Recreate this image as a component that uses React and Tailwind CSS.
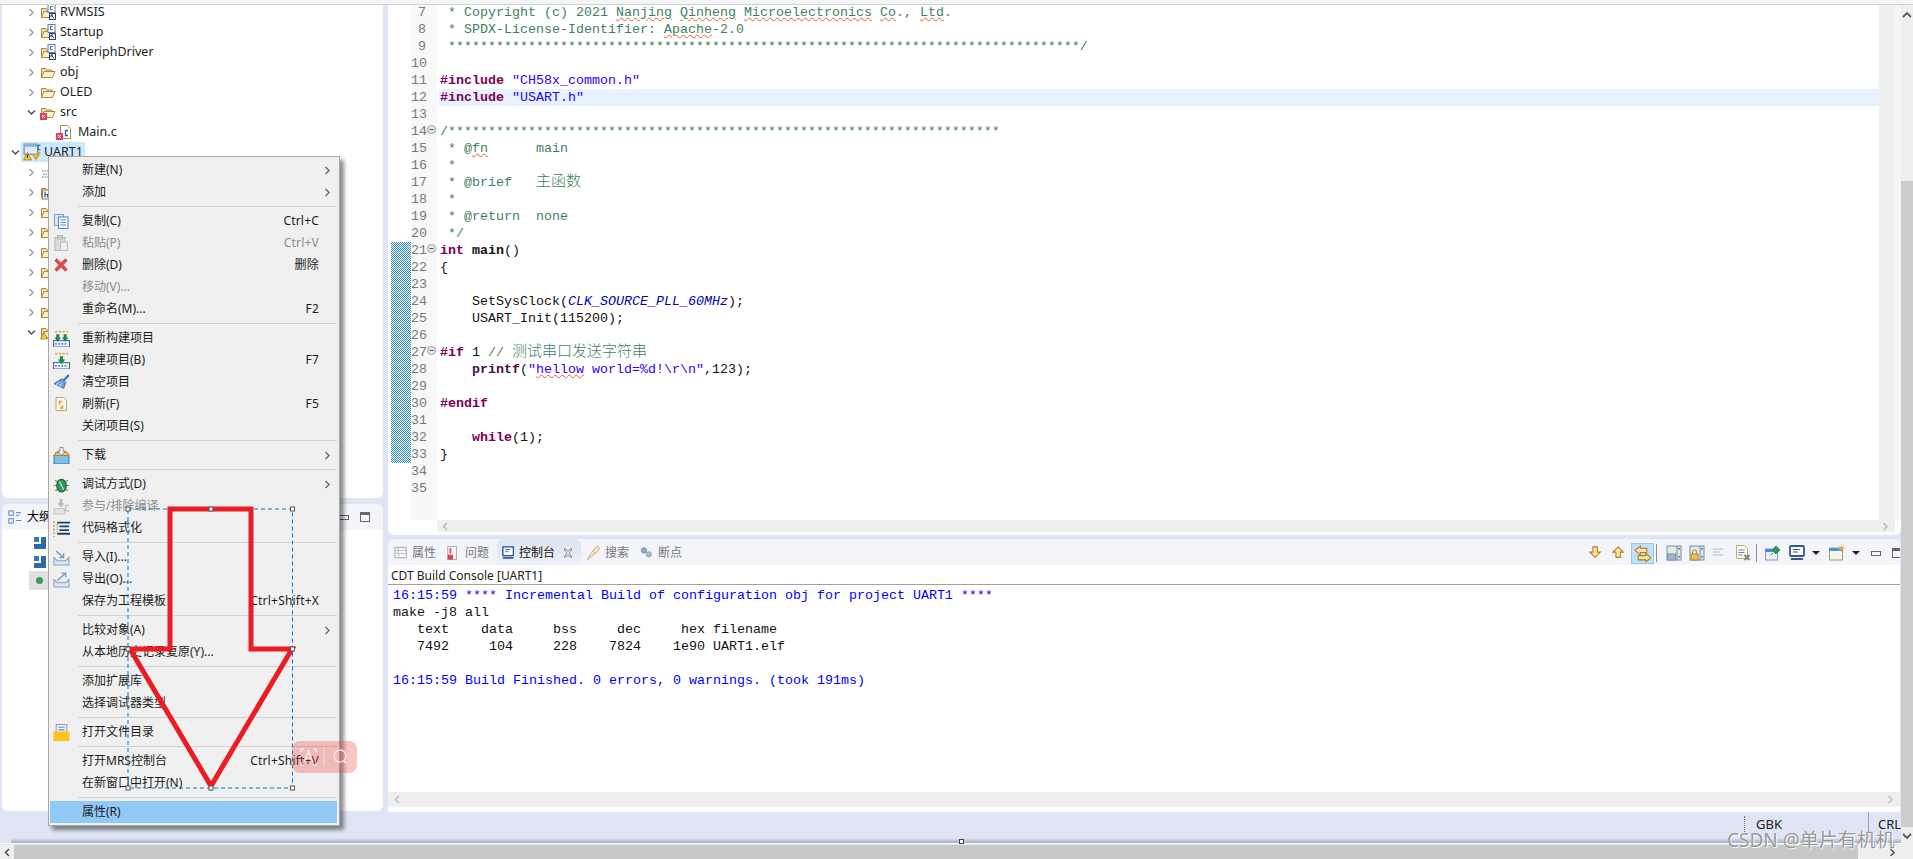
import React from "react";

const uiFont = "font-['Noto_Sans','Noto_Sans_CJK_SC',sans-serif]";
const codeFont = "font-['Liberation_Mono','Noto_Sans_CJK_SC',monospace]";

const Ico = ({ children, size = 16 }) => (
  <svg width={size} height={size} viewBox="0 0 16 16" className="shrink-0" fill="none">
    {children}
  </svg>
);

const Chevron = ({ open, color = "#a0a0a0" }) => (
  <svg width="9" height="9" viewBox="0 0 9 9" fill="none" className="shrink-0">
    {open ? (
      <path d="M1 2.5 4.5 6 8 2.5" stroke="#505050" strokeWidth="1.5" />
    ) : (
      <path d="M2.5 1 6 4.5 2.5 8" stroke={color} strokeWidth="1.5" />
    )}
  </svg>
);

const FolderShape = () => (
  <>
    <path d="M1.5 13.5V4.5h4.5l1 1.5h5v1.5" fill="#f3dca6" stroke="#ad8744" />
    <path d="M1.5 13.5 4 7.5h11l-2.5 6z" fill="#fdf1cd" stroke="#ad8744" />
  </>
);

const FolderIcon = () => (
  <Ico>
    <FolderShape />
  </Ico>
);

const SourceFolder = () => (
  <Ico>
    <FolderShape />
    <rect x="8" y="0.5" width="7" height="8" fill="#fff" stroke="#5f7fa8" />
    <path d="M12.5 2.5h-2v3h2" stroke="#2e5f9e" />
    <rect x="9.5" y="9.5" width="6" height="6" fill="#e8eef8" stroke="#33415c" />
    <path d="M11 11l3 3M11 11h2M11 11v2" stroke="#33415c" />
  </Ico>
);

const ErrorBadge = () => (
  <>
    <rect x="0" y="9" width="7" height="7" fill="#d9405a" />
    <path d="M1.7 10.7l3.4 3.4M5.1 10.7l-3.4 3.4" stroke="#fff" />
  </>
);

const ErrFolder = () => (
  <Ico>
    <FolderShape />
    <ErrorBadge />
  </Ico>
);

const CFileErr = () => (
  <Ico>
    <path d="M4.5 1.5h7l3 3v10h-10z" fill="#fff" stroke="#a98e58" />
    <path d="M12 6.5H9.5v5H12" stroke="#2e5f9e" strokeWidth="1.3" />
    <ErrorBadge />
  </Ico>
);

const ProjectIcon = () => (
  <Ico size={18}>
    <rect x="1" y="1" width="12" height="9" fill="#dfe9f6" stroke="#7188a8" />
    <rect x="1" y="1" width="12" height="2.5" fill="#8fb2d8" />
    <path d="M15.5 2h-2v4h2" stroke="#2e5f9e" />
    <path d="M9 10l2.5 4L15 8" stroke="#e3a51e" strokeWidth="2" />
    <path d="M4 8.5 7.5 15H.5z" fill="#f5cd3c" stroke="#a17a10" strokeWidth="0.7" />
    <path d="M4 10.5v2.5" stroke="#3a2a00" />
  </Ico>
);

const BinaryIcon = () => (
  <Ico>
    <path d="M2 7h6M3 10h8M2 13h6" stroke="#6b7078" strokeDasharray="1.5 1" />
  </Ico>
);

const IncludeIcon = () => (
  <Ico>
    <FolderShape />
    <rect x="2.5" y="6" width="8" height="9" fill="#fff" stroke="#9a7d43" />
    <path d="M5 7.5v6M5 10.5h2.5v3" stroke="#2e5f9e" strokeWidth="1.2" />
  </Ico>
);

const WarnFolder = () => (
  <Ico>
    <FolderShape />
    <path d="M4 8 7.5 15H.5z" fill="#f5cd3c" stroke="#a17a10" strokeWidth="0.7" />
  </Ico>
);

const Copy = () => (
  <Ico>
    <rect x="1.5" y="1.5" width="9" height="11" fill="#dbe6f4" stroke="#7c9cc4" />
    <rect x="5.5" y="4" width="9.5" height="11.5" fill="#f2f6fb" stroke="#5f83b3" />
    <path d="M7.5 7h5.5M7.5 9.5h5.5M7.5 12h5.5" stroke="#6f93c0" />
  </Ico>
);

const Paste = () => (
  <Ico>
    <rect x="2" y="2.5" width="10" height="13" fill="#dcdcdc" stroke="#b5b5b5" />
    <rect x="4.5" y="0.5" width="5" height="3.5" fill="#cfcfcf" stroke="#b5b5b5" />
    <rect x="7.5" y="7" width="7" height="8.5" fill="#efefef" stroke="#bdbdbd" />
  </Ico>
);

const Del = () => (
  <Ico>
    <path d="M2.5 2.5l11 11M13.5 2.5l-11 11" stroke="#dd4a4a" strokeWidth="3.4" />
  </Ico>
);

const Rebuild = ({ two }) => (
  <Ico size={17}>
    <rect x="0.5" y="10" width="15" height="6" fill="#eef3fa" stroke="#4d6a92" />
    <path d="M2 13h12" stroke="#3f7dd0" strokeDasharray="1.5 1.5" strokeWidth="1.6" />
    <path d="M2 1.5h12" stroke="#d8a93c" strokeDasharray="2 1.5" strokeWidth="1.6" />
    {two ? (
      <path d="M3 4h3v3h1.5L4.500 11 1.500 7H3zM10 4h3v3h1.500L11.500 11 8.500 7H10z" fill="#1d8a4c" />
    ) : (
      <path d="M6.500 4h3v3h2L8 11.500 4.500 7h2z" fill="#1d8a4c" />
    )}
  </Ico>
);

const Broom = () => (
  <Ico size={17}>
    <path d="M15 1 9 7" stroke="#2f73b8" strokeWidth="2" />
    <path d="M8.500 4.500l3.500 3.500-2 5.500-9-4.500z" fill="#6fa3dc" stroke="#2f5f9a" strokeWidth="0.8" />
    <path d="M3 10.500 5 8M6 12l2-3" stroke="#fff" strokeWidth="0.8" />
  </Ico>
);

const Refresh = () => (
  <Ico>
    <path d="M3 1.500h7.500l3 3v10H3z" fill="#fbf7ea" stroke="#b9ab84" />
    <path d="M9 5.500H6.500v3M7 12h2.500V9" stroke="#e0a522" strokeWidth="1.500" />
  </Ico>
);

const Download = () => (
  <Ico size={17}>
    <path d="M1 8h14v8H1z" fill="#7fc0ea" stroke="#3b7fae" />
    <path d="M1 8l2-3h10l2 3z" fill="#f1c766" stroke="#a9873a" />
    <path d="M6.500 0.500h3V4H12L8 7.500 4 4h2.500z" fill="#fff" stroke="#666" strokeWidth="0.7" />
  </Ico>
);

const Bug = () => (
  <Ico size={17}>
    <path d="M2 4l3 2M14 4l-3 2M1 9h3M15 9h-3M2 14l3-2M14 14l-3-2" stroke="#7a7a6a" />
    <ellipse cx="8" cy="9" rx="4.500" ry="6" fill="#2f9a5c" stroke="#14603a" />
    <path d="M6 5l4 8" stroke="#c7e8d2" strokeWidth="1.200" />
  </Ico>
);

const Exclude = () => (
  <Ico size={17}>
    <path d="M6 1h3v4h2L7.500 9 4 5h2z" fill="#bdbdbd" />
    <rect x="1" y="10" width="10" height="5" fill="#e4e4e4" stroke="#c4c4c4" />
    <path d="M15 7h-3v5h3" stroke="#c0c0c0" strokeWidth="1.200" />
  </Ico>
);

const Format = () => (
  <Ico size={17}>
    <path d="M1 1v15" stroke="#e0a030" strokeDasharray="2 1.500" strokeWidth="1.500" />
    <path d="M4 2.500h12M6 6h9M6 9.500h9M4 13h12" stroke="#24415f" strokeWidth="1.800" />
    <path d="M4 4v8" stroke="#3f7dd0" strokeDasharray="1 1" />
  </Ico>
);

const ImportIco = () => (
  <Ico size={17}>
    <path d="M1 8v7h14V8l-3 3H4z" fill="#dde6f2" stroke="#8aa0bc" />
    <path d="M3 2l7 6M10 4v4H6" stroke="#7a9cc4" strokeWidth="1.300" />
  </Ico>
);

const ExportIco = () => (
  <Ico size={17}>
    <path d="M1 8v7h14V8l-3 3H4z" fill="#dde6f2" stroke="#8aa0bc" />
    <path d="M4 9l8-7M8 2h4v4" stroke="#7a9cc4" strokeWidth="1.300" />
  </Ico>
);

const OpenDir = () => (
  <Ico size={17}>
    <rect x="3" y="0.500" width="10" height="8" fill="#eef3fb" stroke="#8aa0c8" />
    <path d="M5 3h6M5 5.500h6" stroke="#6b8fd0" />
    <path d="M0.500 7H15.500V16H0.500z" fill="#ffc21f" />
  </Ico>
);

const menuRows = [
  { t: "新建(N)", sub: 1 },
  { t: "添加", sub: 1 },
  "-",
  { t: "复制(C)", k: "Ctrl+C", i: <Copy /> },
  { t: "粘贴(P)", k: "Ctrl+V", i: <Paste />, off: 1 },
  { t: "删除(D)", k: "删除", i: <Del /> },
  { t: "移动(V)...", off: 1 },
  { t: "重命名(M)...", k: "F2" },
  "-",
  { t: "重新构建项目", i: <Rebuild two /> },
  { t: "构建项目(B)", k: "F7", i: <Rebuild /> },
  { t: "清空项目", i: <Broom /> },
  { t: "刷新(F)", k: "F5", i: <Refresh /> },
  { t: "关闭项目(S)" },
  "-",
  { t: "下载", sub: 1, i: <Download /> },
  "-",
  { t: "调试方式(D)", sub: 1, i: <Bug /> },
  { t: "参与/排除编译", off: 1, i: <Exclude /> },
  { t: "代码格式化", i: <Format /> },
  "-",
  { t: "导入(I)...", i: <ImportIco /> },
  { t: "导出(O)...", i: <ExportIco /> },
  { t: "保存为工程模板", k: "Ctrl+Shift+X" },
  "-",
  { t: "比较对象(A)", sub: 1 },
  { t: "从本地历史记录复原(Y)..." },
  "-",
  { t: "添加扩展库" },
  { t: "选择调试器类型" },
  "-",
  { t: "打开文件目录", i: <OpenDir /> },
  "-",
  { t: "打开MRS控制台", k: "Ctrl+Shift+V" },
  { t: "在新窗口中打开(N)" },
  "-",
  { t: "属性(R)", active: 1 },
];

const ContextMenu = () => (
  <div className={`absolute left-[48px] top-[156px] w-[292px] h-[670px] bg-[#f0f0f0] border border-[#a8a8a8] pt-[2px] pl-px text-[12px] text-[#1c1c1c] shadow-[4px_4px_4px_rgba(0,0,0,0.45)] ${uiFont}`}>
    {menuRows.map((r, i) =>
      r === "-" ? (
        <div key={i} className="h-[7px] flex items-center pl-[28px] w-[287px]">
          <div className="h-px w-full bg-[#d2d2d2]" />
        </div>
      ) : (
        <div key={i} className={`h-[22px] w-[287px] flex items-center ${r.active ? "bg-[#91c9f7]" : ""} ${r.off ? "text-[#8c8c8c]" : ""}`}>
          <div className="w-[32px] pl-[3px] flex items-center shrink-0">{r.i}</div>
          <span className="flex-1 whitespace-nowrap">{r.t}</span>
          {r.k && <span className="whitespace-nowrap tracking-[0.2px]">{r.k}</span>}
          <div className="w-[18px] flex justify-start pl-[4px] shrink-0">
            {r.sub && <Chevron color="#707070" />}
          </div>
        </div>
      )
    )}
  </div>
);

const handles = [
  [128, 509], [211, 509], [292.500, 509], [128, 649], [292.500, 649], [128, 788], [211, 788], [292.500, 788],
];

// annotation drawn on top of the screenshot, page coordinates
const RedArrow = () => (
  <svg className="absolute left-0 top-0 pointer-events-none" width="400" height="859" viewBox="0 0 400 859" fill="none">
    <rect x="128" y="509" width="164.500" height="279" stroke="#0078d7" strokeDasharray="4 3" />
    <path d="M170 509H251V649H292L211 786 130 649H170Z" stroke="#ed1c24" strokeWidth="5" />
    {handles.map(([x, y]) => (
      <rect key={`${x}-${y}`} x={x - 2} y={y - 2} width="4" height="4" fill="#fff" stroke="#555" />
    ))}
  </svg>
);

const PinkTool = () => (
  <div className="absolute left-[292px] top-[741px] w-[65px] h-[32px] rounded-lg bg-[#ee4035]/30 flex items-center">
    <svg width="65" height="32" viewBox="0 0 65 32" fill="none" stroke="#fff" strokeOpacity="0.75" strokeWidth="1.300">
      <path d="M9 11V8h3M21 8h3v3M9 21v3h3M24 21v3h-3" />
      <path d="M12.500 21 16.500 10 20.500 21M14 17.500h5" />
      <path d="M32 7v18" strokeOpacity="0.4" />
      <circle cx="48" cy="15" r="6" />
      <path d="M52 20l2 2" />
    </svg>
  </div>
);

const treeRows = [
  { d: 31, i: <SourceFolder />, t: "RVMSIS" },
  { d: 31, i: <SourceFolder />, t: "Startup" },
  { d: 31, i: <SourceFolder />, t: "StdPeriphDriver" },
  { d: 31, i: <FolderIcon />, t: "obj" },
  { d: 31, i: <FolderIcon />, t: "OLED" },
  { d: 31, open: 1, i: <ErrFolder />, t: "src" },
  { d: 0, i: <CFileErr />, t: "Main.c" },
];

const Tree = () => (
  <div className={`-mt-[3px] text-[12.500px] text-[#222] ${uiFont}`}>
    {treeRows.map((r) => (
      <div key={r.t} className="h-[20px] flex items-center">
        {r.d ? (
          <>
            <div className="w-[34px] pl-[25px]"><Chevron open={r.open} /></div>
            <div className="ml-[4px]">{r.i}</div>
            <span className="ml-[4px]">{r.t}</span>
          </>
        ) : (
          <>
            <div className="ml-[54px]">{r.i}</div>
            <span className="ml-[6px]">{r.t}</span>
          </>
        )}
      </div>
    ))}
    <div className="h-[20px] flex items-center">
      <div className="pl-[9px] w-[19px]"><Chevron open /></div>
      <div className="flex items-center bg-[#cce8ff] w-[64px] h-[20px] pl-[2px]">
        <ProjectIcon />
        <span className="ml-[3px]">UART1</span>
      </div>
    </div>
    {[<BinaryIcon />, <IncludeIcon />, <FolderIcon />, <FolderIcon />, <FolderIcon />, <FolderIcon />, <FolderIcon />, <FolderIcon />].map((ic, i) => (
      <div key={i} className="h-[20px] flex items-center">
        <div className="w-[34px] pl-[25px]"><Chevron /></div>
        <div className="ml-[4px]">{ic}</div>
      </div>
    ))}
    <div className="h-[20px] flex items-center">
      <div className="w-[34px] pl-[25px]"><Chevron open /></div>
      <div className="ml-[4px]"><WarnFolder /></div>
    </div>
  </div>
);

const OutlineIcon = () => (
  <Ico size={14}>
    <rect x="1" y="1" width="5" height="5" stroke="#3c78c0" />
    <rect x="1" y="10" width="5" height="5" stroke="#3c78c0" />
    <path d="M9 3h6M9 6h4M9 12h6" stroke="#3c78c0" />
  </Ico>
);

const ModuleIcon = () => (
  <svg width="12" height="12" viewBox="0 0 12 12" className="shrink-0">
    <path d="M0 0h5v5H0z" fill="#3478b4" />
    <path d="M7 0h5v12H0V7h7z" fill="#2a6ca6" />
  </svg>
);

const MinMax = () => (
  <div className="ml-auto flex items-center gap-[11px] pr-[13px]">
    <div className="w-[10px] h-[5px] border border-[#666]" />
    <div className="w-[10px] h-[10px] border border-[#666] border-t-[3px]" />
  </div>
);

const OutlinePanel = () => (
  <div className="h-[307px] bg-white rounded-[6px] overflow-hidden">
    <div className={`h-[26px] bg-[#f3f5fa] flex items-center pl-[6px] text-[12px] ${uiFont}`}>
      <OutlineIcon />
      <span className="ml-[5px]">大纲</span>
      <MinMax />
    </div>
    <div className="pt-[3px]">
      <div className="h-[19px] pl-[32px] flex items-center"><ModuleIcon /></div>
      <div className="h-[19px] pl-[32px] flex items-center"><ModuleIcon /></div>
      <div className="h-[19px] ml-[27px] w-[24px] pl-[7px] flex items-center bg-[#e0e0e0]">
        <div className="w-[7px] h-[7px] rounded-full bg-[#3e9d5e]" />
      </div>
    </div>
  </div>
);

const cm = "text-[#3f7f5f]";
const kw = "text-[#7f0055] font-bold";
const str = "text-[#2a00ff]";
const sq = "underline decoration-wavy decoration-[#e8602c] decoration-1";
const cjk = "text-[15px] font-light";

const codeLines = [
  <span className={cm}> * Copyright (c) 2021 <span className={sq}>Nanjing</span> <span className={sq}>Qinheng</span> <span className={sq}>Microelectronics</span> <span className={sq}>Co</span>., <span className={sq}>Ltd</span>.</span>,
  <span className={cm}> * SPDX-License-Identifier: <span className={sq}>Apache</span>-2.0</span>,
  <span className={cm}> {"*".repeat(79)}/</span>,
  "",
  <><span className={kw}>#include</span> <span className={str}>"CH58x_common.h"</span></>,
  <><span className={kw}>#include</span> <span className={str}>"USART.h"</span></>,
  "",
  <span className={cm}>/{"*".repeat(69)}</span>,
  <span className={cm}> * @<span className={sq}>fn</span>      main</span>,
  <span className={cm}> *</span>,
  <span className={cm}> * @brief   <span className={cjk}>主函数</span></span>,
  <span className={cm}> *</span>,
  <span className={cm}> * @return  none</span>,
  <span className={cm}> */</span>,
  <><span className={kw}>int</span> <span className="font-bold">main</span>()</>,
  "{",
  "",
  <>    SetSysClock(<span className="italic text-[#0000c0]">CLK_SOURCE_PLL_60MHz</span>);</>,
  "    USART_Init(115200);",
  "",
  <><span className={kw}>#if</span> 1 <span className={cm}>// <span className={cjk}>测试串口发送字符串</span></span></>,
  <>    <span className="font-bold text-[#4a1040]">printf</span>(<span className={str}>"<span className={sq}>hellow</span> world=%d!\r\n"</span>,123);</>,
  "",
  <span className={kw}>#endif</span>,
  "",
  <>    <span className={kw}>while</span>(1);</>,
  "}",
  "",
  "",
];

const FoldMark = () => (
  <svg width="9" height="9" viewBox="0 0 9 9" className="absolute left-[16px] top-[2px]">
    <circle cx="4.500" cy="4.500" r="4" fill="#e4e9ee" stroke="#93a0ac" />
    <path d="M2.500 4.500h4" stroke="#556" />
  </svg>
);

const Editor = () => (
  <div className="h-[530px] bg-white rounded-b-[6px] overflow-hidden">
    <div className="h-[515px] flex">
      <div className="w-[3px]" />
      <div className="w-[20px]">
        <div className="mt-[237px] h-[221px] bg-[repeating-conic-gradient(#2a88d8_0_25%,#fff_0_50%)] bg-[length:2px_2px]" />
      </div>
      <div className={`w-[26px] bg-[#f8f8f8] text-[13.330px] leading-[17px] text-[#787878] ${codeFont}`}>
        <div className="-mt-px">
          {codeLines.map((_, i) => (
            <div key={i} className="relative h-[17px] text-right pr-[11px]">
              {i + 7}
              {[14, 21, 27].includes(i + 7) && <FoldMark />}
            </div>
          ))}
        </div>
      </div>
      <div className={`w-[1442px] ml-[2px] text-[13.330px] leading-[17px] text-[#111] ${codeFont}`}>
        <div className="-mt-px">
          {codeLines.map((l, i) => (
            <div key={i} className={`h-[17px] pl-px whitespace-pre ${i === 5 ? "bg-[#e8f2fe]" : ""}`}>{l}</div>
          ))}
        </div>
      </div>
      <div className="w-[16px] bg-[#efefef] ml-auto" />
      <div className="w-[6px] bg-[#f5f5f5]" />
    </div>
    <div className="h-[12px] flex">
      <div className="w-[49px]" />
      <div className="w-[1458px] bg-[#efefef] flex items-center justify-between pl-[4px] pr-[5px]">
        <svg width="9" height="9" viewBox="0 0 9 9" fill="none"><path d="M6 1 2.500 4.500 6 8" stroke="#b8b8b8" strokeWidth="1.500" /></svg>
        <Chevron color="#b8b8b8" />
      </div>
    </div>
  </div>
);

const Props = () => (
  <Ico size={14}>
    <rect x="1" y="1.500" width="13" height="12" fill="#f6f6f6" stroke="#a0a4ac" />
    <path d="M1 5h13M1 8.500h13M5 1.500v12" stroke="#b8bcc4" />
  </Ico>
);

const Problems = () => (
  <Ico size={14}>
    <rect x="2" y="0.500" width="10" height="15" fill="#f4f4f4" stroke="#a8a8a8" />
    <path d="M5 2.500v6" stroke="#c57" strokeWidth="2" />
    <rect x="2" y="10" width="6" height="5.500" fill="#d9405a" />
  </Ico>
);

const ConsoleIco = () => (
  <Ico size={14}>
    <rect x="1" y="1" width="12" height="10" fill="#fff" stroke="#2f5c9c" strokeWidth="1.600" />
    <path d="M3.500 4h6M3.500 6.500h4" stroke="#2f5c9c" />
    <path d="M1 13.500h12" stroke="#2f5c9c" strokeWidth="2" />
  </Ico>
);

const CloseX = () => (
  <svg width="10" height="10" viewBox="0 0 10 10" fill="none" className="ml-[8px] shrink-0">
    <path d="M1 1h2l2 2.500L7 1h2L6 5l3 4H7L5 6.500 3 9H1l3-4z" fill="#fff" stroke="#666" strokeWidth="0.8" />
  </svg>
);

const SearchIco = () => (
  <Ico>
    <path d="M1 15 6 7l5-6 3 2-5 6z" fill="#f6e7bf" stroke="#c9b68a" />
    <path d="M7 6l3 3" stroke="#c9b68a" />
  </Ico>
);

const BreakIco = () => (
  <Ico size={14}>
    <circle cx="4.500" cy="5" r="3" fill="#8fb0cc" stroke="#6c8ca8" />
    <circle cx="10" cy="9.500" r="3" fill="#a9c0d4" stroke="#7c9cb8" />
  </Ico>
);

const Arrow = ({ up }) => (
  <Ico size={14}>
    <path d={up ? "M7 1 13 7H9.500v6h-5V7H1z" : "M7 13 1 7h3.500V1h5v6H13z"} fill="#fbe7a8" stroke="#b9791a" strokeWidth="1.200" />
  </Ico>
);

const LinkArrows = () => (
  <Ico size={17}>
    <path d="M6 1 1 5l5 4V7h6V3H6z" fill="#fbe7a8" stroke="#b9791a" />
    <path d="M11 8l5 4-5 4v-2H4v-4h7z" fill="#fbe7a8" stroke="#b9791a" />
  </Ico>
);

const ViewPaneIco = ({ lock }) => (
  <Ico>
    <rect x="1" y="1" width="14" height="14" fill="#dfe9e8" stroke="#7d8ba0" />
    <path d="M11 1v14" stroke="#7d8ba0" />
    <rect x="12.300" y="3" width="1.500" height="1.500" fill="#3f5f8a" />
    <rect x="12.300" y="11" width="1.500" height="1.500" fill="#3f5f8a" />
    {lock ? (
      <>
        <path d="M3.500 9V7a2 2 0 0 1 4 0v2" stroke="#b08a2c" />
        <rect x="2" y="9" width="7" height="6" fill="#f0c24a" stroke="#b08a2c" />
      </>
    ) : (
      <rect x="1.500" y="9" width="8" height="6" fill="#a4b4d0" stroke="#8090b0" />
    )}
  </Ico>
);

const LinesIco = () => (
  <Ico>
    <path d="M2 4h10M2 7h7M2 10h10" stroke="#a7bcd8" strokeWidth="1.200" />
  </Ico>
);

const ClearIco = () => (
  <Ico>
    <path d="M1.500 0.500h8l3 3v10h-11z" fill="#f9f7ee" stroke="#bcae88" />
    <path d="M3.500 5h6M3.500 7.500h6M3.500 10h4" stroke="#6b88b0" />
    <path d="M9.500 10l5 5M14.500 10l-5 5" stroke="#808080" strokeWidth="2" />
  </Ico>
);

const PinIco = () => (
  <Ico>
    <rect x="0.500" y="4" width="12" height="11" fill="#eef2f7" stroke="#8a9ab0" />
    <rect x="0.500" y="4" width="12" height="3" fill="#3f8cd8" />
    <path d="M9 7 7 5l4-4 4 4-4 4zM8 8 5.500 10.500" fill="#2e9a50" stroke="#2e9a50" />
  </Ico>
);

const DisplayIco = () => (
  <Ico>
    <rect x="1" y="1" width="14" height="10" rx="1" fill="#fff" stroke="#34578f" strokeWidth="1.800" />
    <path d="M4 4.500h7M4 7h5" stroke="#34578f" />
    <path d="M2 14h12" stroke="#34578f" strokeWidth="2" />
  </Ico>
);

const NewConsole = () => (
  <Ico>
    <rect x="0.500" y="3" width="13" height="12" fill="#f6f6ea" stroke="#9a9a84" />
    <rect x="0.500" y="3" width="13" height="3" fill="#4a98dc" />
    <path d="M12.500 0.500v6M9.500 3.500h6M10.500 1.500l4 4M14.500 1.500l-4 4" stroke="#e2a93a" />
  </Ico>
);

const Drop = () => <div className="w-0 h-0 border-l-[4px] border-r-[4px] border-t-[4px] border-l-transparent border-r-transparent border-t-[#222]" />;
const Sep = () => <div className="w-px h-[18px] bg-[#8c8c8c]" />;

const tools = [
  [22, <Arrow />], [24, <Arrow up />], [23, <LinkArrows />, 1], [5, <Sep />], [30, <ViewPaneIco />], [16, <ViewPaneIco lock />],
  [28, <LinesIco />], [20, <ClearIco />], [7, <Sep />], [26, <PinIco />], [22, <DisplayIco />], [16, <Drop />], [26, <NewConsole />], [12, <Drop />],
];

const widthClass = { 5: "w-[5px]", 7: "w-[7px]", 12: "w-[12px]", 16: "w-[16px]", 20: "w-[20px]", 22: "w-[22px]", 23: "w-[23px]", 24: "w-[24px]", 26: "w-[26px]", 28: "w-[28px]", 30: "w-[30px]" };

const Toolbar = () => (
  <div className="ml-auto -mr-[4px] flex items-center h-full shrink-0">
    {tools.map(([w, ic, on], i) => (
      <div key={i} className={`${widthClass[w]} h-[21px] flex items-center justify-center shrink-0 ${on ? "bg-[#bfdffa] border border-[#90c8f8]" : ""}`}>{ic}</div>
    ))}
    <div className="w-[28px] flex items-center justify-center"><div className="w-[10px] h-[5px] border border-[#666]" /></div>
    <div className="w-[14px] flex items-center justify-center"><div className="w-[10px] h-[10px] border border-[#666] border-t-[3px] shrink-0" /></div>
  </div>
);

const info = "text-[#0000ff]";

const ConsolePanel = () => (
  <div className="mt-[4px] w-[1512px] h-[273px] bg-white rounded-t-[6px] overflow-hidden flex flex-col">
    <div className={`h-[26px] pt-[2px] bg-[#f3f5fa] flex items-center pl-[6px] text-[12px] text-[#777] shrink-0 ${uiFont}`}>
      <Props />
      <span className="ml-[4px]">属性</span>
      <div className="ml-[10px]"><Problems /></div>
      <span className="ml-[5px]">问题</span>
      <div className="ml-[8px] -mt-[2px] h-[26px] pt-[2px] flex items-center pl-[5px] pr-[8px] rounded-t-[6px] bg-gradient-to-b from-[#dbe3f1] to-[#eef1f8] text-[#111]">
        <ConsoleIco />
        <span className="ml-[3px]">控制台</span>
        <CloseX />
      </div>
      <div className="ml-[5px]"><SearchIco /></div>
      <span className="ml-[3px]">搜索</span>
      <div className="ml-[11px]"><BreakIco /></div>
      <span className="ml-[4px]">断点</span>
      <Toolbar />
    </div>
    <div className={`h-[19px] shrink-0 pl-[3px] text-[12px] leading-[21px] border-b border-[#a0a0a0] box-content text-[#222] ${uiFont}`}>CDT Build Console [UART1]</div>
    <div className={`pt-[2px] pl-[5px] h-[207px] text-[13.330px] leading-[17px] whitespace-pre text-[#111] ${codeFont}`}>
      <div className={info}>16:15:59 **** Incremental Build of configuration obj for project UART1 ****</div>
      <div>make -j8 all</div>
      <div>   text    data     bss     dec     hex filename</div>
      <div>   7492     104     228    7824    1e90 UART1.elf</div>
      <div> </div>
      <div className={info}>16:15:59 Build Finished. 0 errors, 0 warnings. (took 191ms)</div>
    </div>
    <div className="h-[15px] shrink-0 bg-[#efefef] flex items-center justify-between pl-[5px] pr-[5px]">
      <svg width="9" height="9" viewBox="0 0 9 9" fill="none"><path d="M6 1 2.500 4.500 6 8" stroke="#c0c0c0" strokeWidth="1.500" /></svg>
      <Chevron color="#c0c0c0" />
    </div>
  </div>
);

const StatusBar = () => (
  <div className={`h-[32px] shrink-0 relative text-[13px] text-[#222] ${uiFont}`}>
    <div className="h-[26px] flex items-center justify-end overflow-hidden">
      <div className="h-[18px] w-px border-l border-dotted border-[#777]" />
      <span className="ml-[11px] w-[112px]">GBK</span>
      <div className="h-[26px] w-px bg-[#9aa0ae]" />
      <span className="ml-[9px] w-[23px] overflow-hidden">CRL</span>
    </div>
    <div className="ml-[11px] h-[5px] bg-gradient-to-b from-[#dfe5f4] to-[#a4adc2]" />
    <div className="h-px bg-white" />
    <div className="absolute left-[959px] top-[27px] w-[5px] h-[5px] bg-white border border-[#444]" />
  </div>
);

const Watermark = () => (
  <div className={`absolute left-[1727px] top-[828px] text-[19px] leading-[24px] whitespace-nowrap text-[#8a8a8a]/90 [text-shadow:0_0_1px_#fff,1px_1px_1px_#fff] ${uiFont}`}>
    CSDN @单片有机机
  </div>
);

export default function App() {
  return (
    <div className="relative w-[1913px] h-[859px] overflow-hidden bg-[#dfe5f4] flex flex-col">
      <div className="h-[5px] shrink-0 bg-[#f3f4f6] border-b border-[#d2d2d2]" />
      <div className="flex h-[840px]">
        <div className="w-[1901px] flex flex-col">
          <div className="h-[807px] flex">
            <div className="ml-[2px] w-[381px] flex flex-col">
              <div className="h-[493px] mb-[6px] bg-white rounded-b-[6px] overflow-hidden">
                <Tree />
              </div>
              <OutlinePanel />
            </div>
            <div className="ml-[5px] w-[1513px]">
              <Editor />
              <ConsolePanel />
            </div>
          </div>
          <StatusBar />
        </div>
        <div className="w-[12px] flex flex-col bg-[#efefef]">
          <div className="h-[176px] pt-[5px] pl-[1px]">
            <svg width="10" height="9" viewBox="0 0 10 9" fill="none"><path d="M1 7 5 3l4 4" stroke="#5a5a5a" strokeWidth="1.800" /></svg>
          </div>
          <div className="h-[646px] bg-[#cdcdcd]" />
          <div className="pt-[5px] pl-[1px]">
            <svg width="10" height="9" viewBox="0 0 10 9" fill="none"><path d="M1 2 5 6l4-4" stroke="#5a5a5a" strokeWidth="1.800" /></svg>
          </div>
        </div>
      </div>
      <div className="h-[14px] flex">
        <div className="w-[14px] bg-[#efefef] flex items-center justify-center">
          <svg width="9" height="9" viewBox="0 0 9 9" fill="none"><path d="M6 1 2.500 4.500 6 8" stroke="#555" strokeWidth="1.600" /></svg>
        </div>
        <div className="w-[1844px] bg-[#c8c8c8]" />
        <div className="flex-1 bg-[#efefef] flex items-center justify-end pr-[16px]">
          <Chevron color="#555" />
        </div>
      </div>
      <ContextMenu />
      <RedArrow />
      <PinkTool />
      <Watermark />
    </div>
  );
}
